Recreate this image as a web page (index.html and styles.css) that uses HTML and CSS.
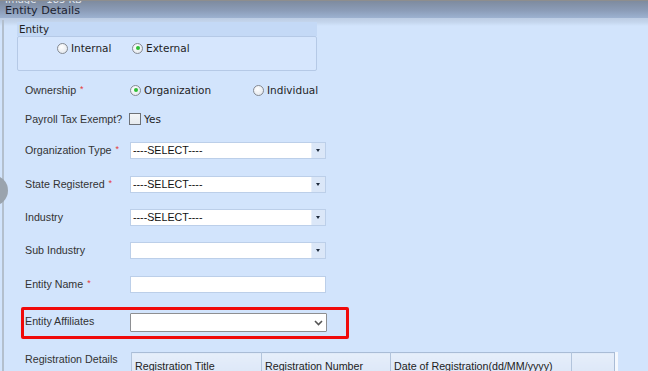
FILE: index.html
```html
<!DOCTYPE html>
<html lang="en">
<head>
    <meta charset="UTF-8">
    <meta name="viewport" content="width=device-width, initial-scale=1.0">
    <title>Entity Details</title>
    <link rel="stylesheet" href="styles.css">
</head>
<body>
    <div class="screen">
        <div class="topbar">
            <div class="caption">Image - 183 KB</div>
            <div class="title">Entity Details</div>
        </div>
        <div class="topfade"></div>

        <div class="panel">
            <div class="group">
                <div class="group-head">Entity</div>
                <div class="group-body">
                    <label class="opt opt-internal"><span class="radio"></span>Internal</label>
                    <label class="opt"><span class="radio checked"></span>External</label>
                </div>
            </div>

            <div class="form">
                <div class="row row-own">
                    <div class="label">Ownership <span class="req">*</span></div>
                    <div class="field">
                        <label class="opt opt-org"><span class="radio checked"></span>Organization</label>
                        <label class="opt"><span class="radio"></span>Individual</label>
                    </div>
                </div>
                <div class="row row-tax">
                    <div class="label">Payroll Tax Exempt?</div>
                    <div class="field">
                        <label class="opt opt-check"><span class="checkbox"></span>Yes</label>
                    </div>
                </div>
                <div class="row row-org">
                    <div class="label">Organization Type <span class="req">*</span></div>
                    <div class="combo"><span class="combo-text">----SELECT----</span><span class="combo-btn"></span></div>
                </div>
                <div class="row row-state">
                    <div class="label">State Registered <span class="req">*</span></div>
                    <div class="combo"><span class="combo-text">----SELECT----</span><span class="combo-btn"></span></div>
                </div>
                <div class="row row-ind">
                    <div class="label">Industry</div>
                    <div class="combo"><span class="combo-text">----SELECT----</span><span class="combo-btn"></span></div>
                </div>
                <div class="row row-sub">
                    <div class="label">Sub Industry</div>
                    <div class="combo"><span class="combo-text"></span><span class="combo-btn"></span></div>
                </div>
                <div class="row row-name">
                    <div class="label">Entity Name <span class="req">*</span></div>
                    <div class="textbox"></div>
                </div>

                <div class="highlight">
                    <div class="label label-top">Entity Affiliates</div>
                    <div class="native-select">
                        <svg width="9" height="6" viewBox="0 0 9 6"><path d="M1 1 L4.5 4.5 L8 1" fill="none" stroke="#555" stroke-width="1.6"/></svg>
                    </div>
                </div>

                <div class="row row-reg">
                    <div class="label">Registration Details</div>
                    <div class="grid-wrap">
                        <table class="grid">
                            <tr>
                                <th class="c1">Registration Title</th>
                                <th class="c2">Registration Number</th>
                                <th class="c3">Date of Registration(dd/MM/yyyy)</th>
                                <th class="c4"></th>
                            </tr>
                        </table>
                    </div>
                </div>
            </div>
        </div>

        <div class="handle"></div>
    </div>
</body>
</html>
```

FILE: styles.css
```css
html, body {
    margin: 0;
    padding: 0;
}
body {
    background-color: #d2e4fc;
    font-family: "Liberation Sans", Arial, sans-serif;
    font-size: 11px;
    color: #333;
}
.screen {
    position: relative;
    width: 648px;
    height: 371px;
    overflow: hidden;
}

/* window title strip */
.topbar {
    height: 18px;
    border-top: 1px solid #8e8e8e;
    background: linear-gradient(to bottom, #7e8b9f 0%, #8b9cb7 55%, #9db2d1 100%);
    overflow: hidden;
    box-sizing: border-box;
    padding-left: 5px;
}
.caption {
    font-family: "DejaVu Sans", sans-serif;
    font-size: 10px;
    line-height: 10px;
    color: #dfe5ee;
    margin-top: -6px;
    height: 9px;
    overflow: hidden;
}
.title {
    font-family: "DejaVu Sans", sans-serif;
    font-size: 11.2px;
    line-height: 13px;
    color: #1c2230;
}
.topfade {
    height: 8px;
    background: linear-gradient(to bottom, #bccce3 0%, #c4d5ec 50%, #d2e4fc 100%);
}

.panel {
    margin-left: 2px;
    margin-top: -6px;
    border-left: 2px solid #b3bfcd;
    height: 360px;
}

/* Entity group box */
.group {
    margin-left: 13px;
    padding-top: 2px;
    width: 300px;
}
.group-head {
    height: 14px;
    line-height: 14px;
    padding-left: 2px;
    background-color: #c4d9f6;
    font-family: "DejaVu Sans", sans-serif;
    font-size: 10.3px;
    color: #222;
}
.group-body {
    height: 35px;
    box-sizing: border-box;
    border: 1px solid #b5c9e6;
    border-radius: 2px;
    background-color: #d6e6fd;
    padding: 5px 0 0 39px;
    display: flex;
}

.opt {
    display: flex;
    align-items: center;
    font-family: "DejaVu Sans", sans-serif;
    font-size: 10.5px;
    color: #1f1f1f;
    height: 12px;
}
.opt-internal {
    width: 75px;
}
.opt-org {
    width: 123px;
}
.radio {
    width: 9px;
    height: 9px;
    border: 1px solid #858a92;
    border-radius: 50%;
    background: radial-gradient(circle at 40% 35%, #ffffff 0%, #e7ebf0 70%, #d3d8de 100%);
    margin-right: 3px;
    position: relative;
    flex: none;
}
.radio.checked::after {
    content: "";
    position: absolute;
    left: 2.5px;
    top: 2.5px;
    width: 4px;
    height: 4px;
    border-radius: 50%;
    background-color: #2cbf34;
}
.checkbox {
    width: 10px;
    height: 10px;
    border: 1px solid #6d7177;
    background: linear-gradient(to bottom, #f4f6f8, #e6eaee);
    margin-right: 3px;
    flex: none;
}
.opt-check {
    margin-left: -1px;
}

/* form rows */
.form {
    margin-top: 3px;
    padding-left: 21px;
}
.row {
    display: flex;
    align-items: center;
}
.row-own   { height: 32px; }
.row-tax   { height: 26px; }
.row-org   { height: 36px; }
.row-state { height: 32px; }
.row-ind   { height: 34px; }
.row-sub   { height: 32px; }
.row-name  { height: 36px; }
.label {
    width: 105px;
    flex: none;
    color: #333;
    font-size: 10.7px;
}
.req {
    color: #e53a3a;
    font-size: 9px;
    vertical-align: 2px;
    margin-left: 1px;
}
.field {
    display: flex;
    align-items: center;
}

.combo {
    width: 196px;
    height: 17px;
    box-sizing: border-box;
    border: 1px solid #bccfe9;
    background-color: #fff;
    display: flex;
}
.combo-text {
    flex: 1;
    padding-left: 2px;
    line-height: 15px;
    color: #111;
    font-size: 10.7px;
}
.combo-btn {
    width: 13px;
    background-color: #dbe7f8;
    border-left: 1px solid #e8f0fb;
    position: relative;
}
.combo-btn::after {
    content: "";
    position: absolute;
    left: 4px;
    top: 6px;
    border-left: 2.5px solid transparent;
    border-right: 2.5px solid transparent;
    border-top: 3px solid #1d2a3c;
}
.textbox {
    width: 196px;
    height: 17px;
    box-sizing: border-box;
    border: 1px solid #bccfe9;
    background-color: #fff;
}

/* red callout around Entity Affiliates */
.highlight {
    margin-top: 5px;
    margin-left: -4px;
    width: 328px;
    height: 32px;
    box-sizing: border-box;
    border: 3px solid #f00a0a;
    border-radius: 2px;
    padding: 3px 0 0 1px;
    display: flex;
}
.label-top {
    line-height: 16px;
}
.native-select {
    width: 197px;
    height: 19px;
    box-sizing: border-box;
    border: 1px solid #8d8f92;
    border-radius: 1px;
    background-color: #fff;
    display: flex;
    justify-content: flex-end;
    align-items: center;
    padding-right: 3px;
}

.row-reg {
    margin-top: 13px;
    align-items: flex-start;
}
.row-reg .label {
    padding-top: 1px;
}
.grid-wrap {
    margin-left: 1px;
    border-right: 3px solid #f4f8fe;
}
.grid {
    border-collapse: collapse;
    border: 1px solid #a9bcd6;
}
.grid th {
    height: 26px;
    box-sizing: border-box;
    padding: 7px 0 0 3px;
    vertical-align: top;
    text-align: left;
    font-weight: normal;
    font-size: 10.7px;
    color: #222;
    border-left: 1px solid #b2c4dc;
    background: linear-gradient(to bottom, #e6eefa, #dae6f7);
}
.grid .c1 { width: 130px; }
.grid .c2 { width: 129px; }
.grid .c3 { width: 181px; }
.grid .c4 { width: 43px; }

/* slide handle on the left edge */
.handle {
    position: absolute;
    left: -23px;
    top: 175px;
    width: 31px;
    height: 31px;
    border-radius: 50%;
    background-color: #9aa3ad;
}
```
